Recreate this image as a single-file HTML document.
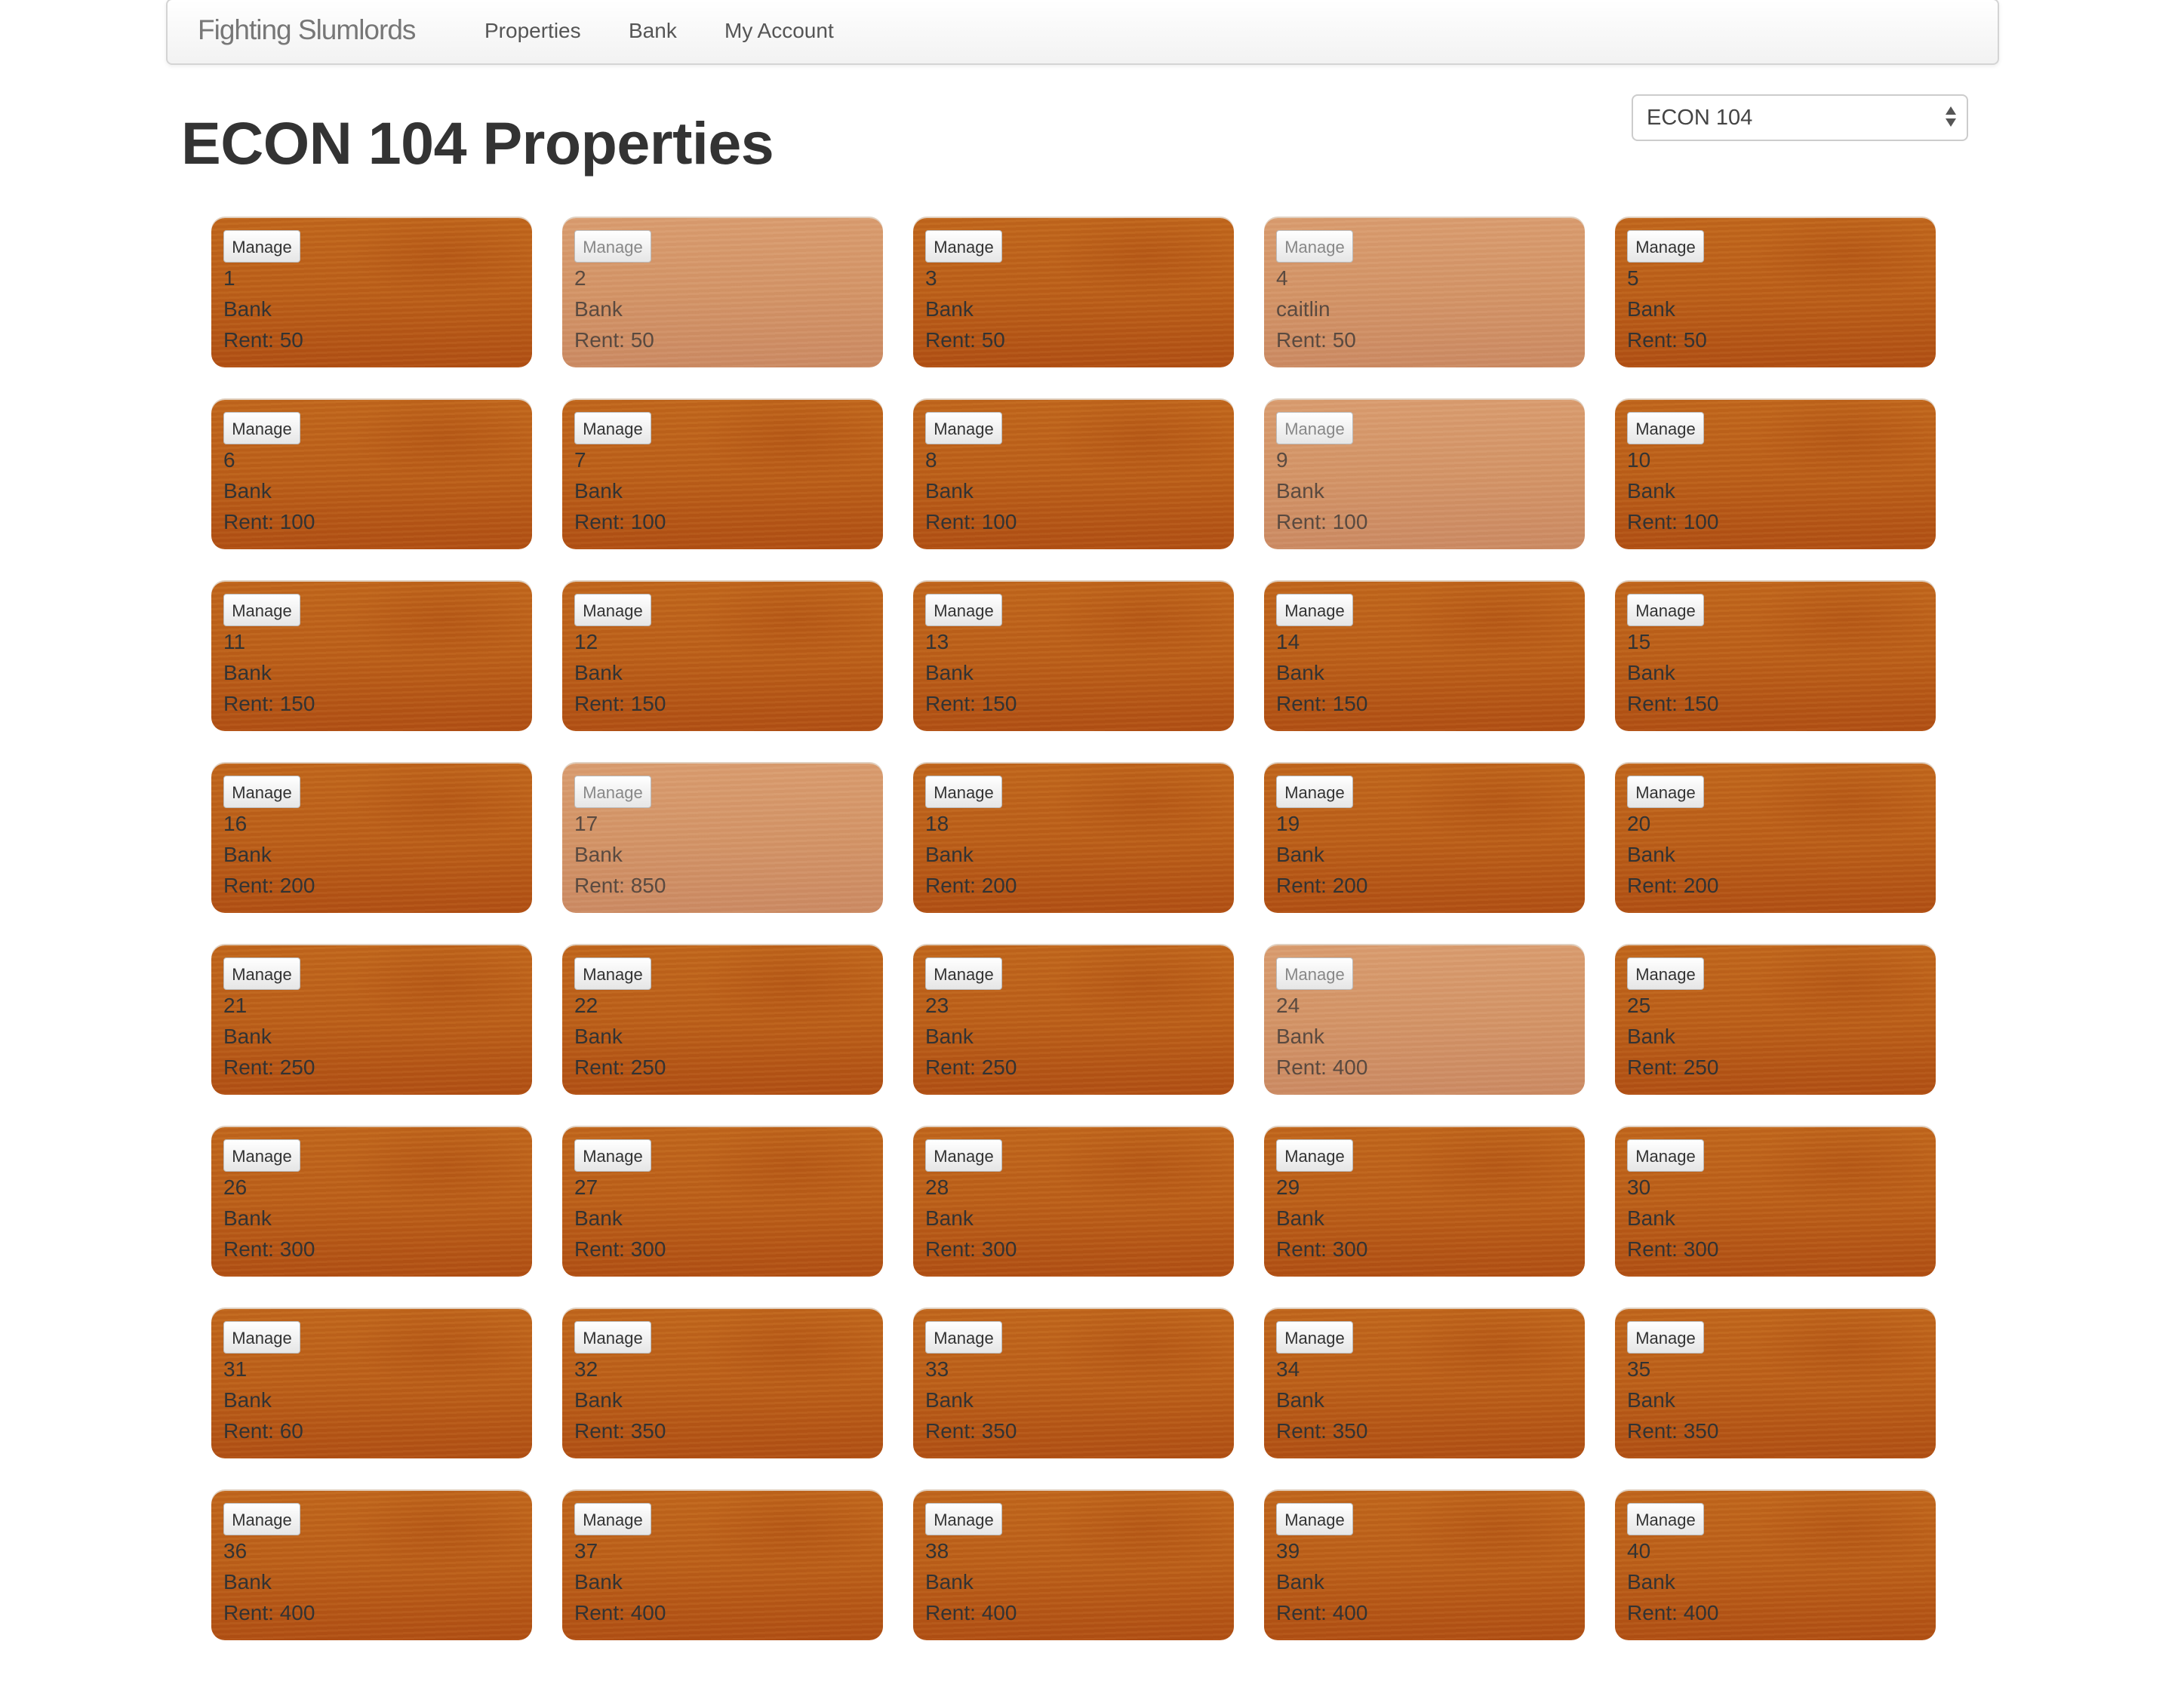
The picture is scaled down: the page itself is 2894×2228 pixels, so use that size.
<!DOCTYPE html>
<html><head><meta charset="utf-8"><style>
html,body{margin:0;padding:0;background:#fff;width:2894px;height:2228px;overflow:hidden;font-family:"Liberation Sans",Arial,sans-serif;}
.nav{position:absolute;left:220px;top:-2px;width:2425px;height:84px;border:2px solid #d4d4d4;border-radius:8px;background:linear-gradient(#ffffff,#f2f2f2);box-shadow:0 2px 6px rgba(0,0,0,.07);}
.brand{position:absolute;left:40px;top:19px;font-size:37px;color:#777;letter-spacing:-1px;}
.nl{position:absolute;top:25px;font-size:28px;color:#555;}
h1{position:absolute;left:240px;top:140px;margin:0;font-size:79px;font-weight:bold;color:#333;line-height:100px;letter-spacing:-0.5px;}
.sel{position:absolute;left:2162px;top:125px;width:442px;height:58px;border:2px solid #ccc;border-radius:8px;background:#fff;}
.sel span{position:absolute;left:18px;top:13px;font-size:29px;color:#444;}
.arr{position:absolute;right:14px;top:14px;width:0;height:0;border-left:7px solid transparent;border-right:7px solid transparent;}
.card{position:absolute;width:425px;height:198px;border-radius:18px;overflow:hidden;
background:
repeating-linear-gradient(178deg,rgba(255,200,120,.06) 0 3px,rgba(120,40,0,.05) 3px 7px),
radial-gradient(ellipse 120px 60px at 72% 25%,rgba(160,60,10,.25),transparent),
linear-gradient(180deg,#c0661c 0%,#bb5f19 50%,#b04f14 100%);
box-shadow:0 -2px 0 #e0d0c0;}
.card.f{background:
repeating-linear-gradient(178deg,rgba(255,230,200,.06) 0 3px,rgba(150,80,40,.04) 3px 7px),
linear-gradient(180deg,#d99c6f 0%,#d39467 50%,#cb8a63 100%);}
.card.f .t{color:#5a4a40;}
.card.f .btn{color:#888;}
.btn{position:absolute;left:16px;top:16px;width:102px;height:43px;border:1px solid #bbb;border-radius:4px;background:linear-gradient(#fff,#e6e6e6);font-size:22px;color:#333;text-align:center;line-height:43px;box-sizing:border-box;}
.t{position:absolute;left:16px;font-size:28px;color:#333;}
</style></head><body>
<div class="nav">
<div class="brand">Fighting Slumlords</div>
<div class="nl" style="left:420px">Properties</div>
<div class="nl" style="left:611px">Bank</div>
<div class="nl" style="left:738px">My Account</div>
</div>
<h1>ECON 104 Properties</h1>
<div class="sel"><span>ECON 104</span>
<div class="arr" style="top:14px;border-bottom:11px solid #555"></div>
<div class="arr" style="top:30px;border-top:11px solid #555"></div></div>
<div id="g"></div>
<script>
var rents=[50,50,50,50,50,100,100,100,100,100,150,150,150,150,150,200,850,200,200,200,250,250,250,400,250,300,300,300,300,300,60,350,350,350,350,400,400,400,400,400];
var faded={2:1,4:1,9:1,17:1,24:1};
var h='';
for(var i=0;i<40;i++){var r=Math.floor(i/5),c=i%5,n=i+1;
var x=280+c*465,y=289+r*241;
h+='<div class="card'+(faded[n]?' f':'')+'" style="left:'+x+'px;top:'+y+'px"><div class="btn">Manage</div>'+
'<div class="t" style="top:64px">'+n+'</div><div class="t" style="top:105px">'+(n==4?'caitlin':'Bank')+'</div><div class="t" style="top:146px">Rent: '+rents[i]+'</div></div>';}
document.getElementById('g').innerHTML=h;
</script>
</body></html>
